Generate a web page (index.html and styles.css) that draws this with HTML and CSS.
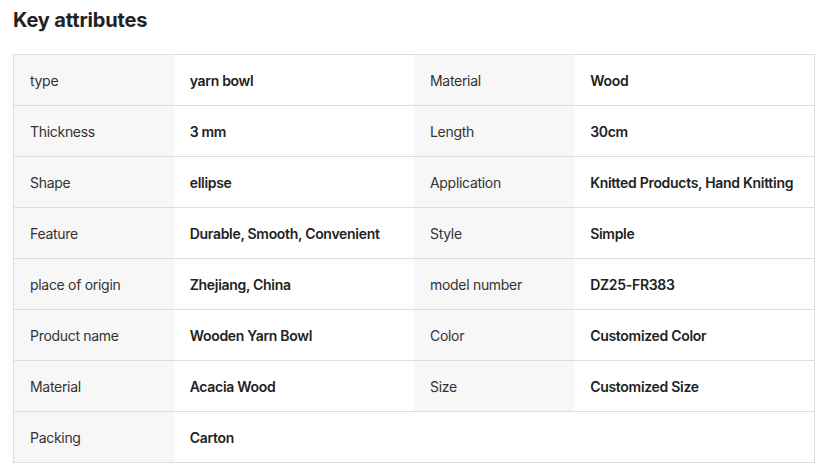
FILE: index.html
```html
<!DOCTYPE html>
<html lang="en">
<head>
    <meta charset="UTF-8">
    <meta name="viewport" content="width=device-width, initial-scale=1.0">
    <title>Key attributes</title>
    <link rel="stylesheet" href="styles.css">
</head>
<body>
    <div class="attributes">
        <h2 class="title">Key attributes</h2>
        <table class="attr-table">
            <tr>
                <td class="label">type</td><td class="value">yarn bowl</td>
                <td class="label">Material</td><td class="value">Wood</td>
            </tr>
            <tr>
                <td class="label">Thickness</td><td class="value">3 mm</td>
                <td class="label">Length</td><td class="value">30cm</td>
            </tr>
            <tr>
                <td class="label">Shape</td><td class="value">ellipse</td>
                <td class="label">Application</td><td class="value">Knitted Products, Hand Knitting</td>
            </tr>
            <tr>
                <td class="label">Feature</td><td class="value">Durable, Smooth, Convenient</td>
                <td class="label">Style</td><td class="value">Simple</td>
            </tr>
            <tr>
                <td class="label">place of origin</td><td class="value">Zhejiang, China</td>
                <td class="label">model number</td><td class="value">DZ25-FR383</td>
            </tr>
            <tr>
                <td class="label">Product name</td><td class="value">Wooden Yarn Bowl</td>
                <td class="label">Color</td><td class="value">Customized Color</td>
            </tr>
            <tr>
                <td class="label">Material</td><td class="value">Acacia Wood</td>
                <td class="label">Size</td><td class="value">Customized Size</td>
            </tr>
            <tr>
                <td class="label">Packing</td><td class="value">Carton</td>
                <td class="empty"></td><td class="empty"></td>
            </tr>
        </table>
    </div>
</body>
</html>
```

FILE: styles.css
```css
* {
    margin: 0;
    padding: 0;
    box-sizing: border-box;
    font-family: Inter, "Noto Sans", sans-serif;
}
body {
    background: #fff;
    color: #222;
}
.attributes {
    padding: 7px 0 0 13px;
    width: 815px;
}
.title {
    font-size: 20px;
    font-weight: 700;
    line-height: 26px;
    letter-spacing: -0.15px;
    color: #222;
    margin-bottom: 21px;
}
.attr-table {
    width: 802px;
    border-collapse: collapse;
    border: 1px solid #ddd;
    table-layout: fixed;
}
.attr-table td {
    height: 51px;
    padding: 0 16px;
    font-size: 14px;
    letter-spacing: -0.3px;
    border-bottom: 1px solid #ddd;
    vertical-align: middle;
    white-space: nowrap;
}
.label {
    width: 160px;
    background: #f7f7f7;
    color: #333;
}
.value {
    width: 240px;
    font-weight: 600;
    color: #222;
}
.empty {
    background: #fff;
}
```
